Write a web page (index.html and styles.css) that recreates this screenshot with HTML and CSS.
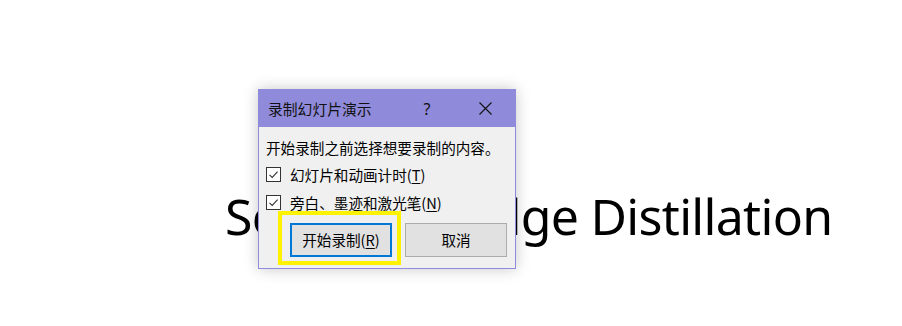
FILE: index.html
```html
<!DOCTYPE html>
<html lang="zh">
<head>
<meta charset="utf-8">
<link rel="stylesheet" href="styles.css">
</head>
<body>
<div class="slide">
  <div class="slide-title">Self-Knowledge Distillation</div>
</div>
<div class="dialog">
  <div class="titlebar">
    <span class="title">录制幻灯片演示</span>
    <span class="help">?</span>
    <span class="close"><svg width="13" height="13" viewBox="0 0 13 13"><path d="M0.5 0.5 L12.5 12.5 M12.5 0.5 L0.5 12.5" stroke="#111" stroke-width="1.1" fill="none"/></svg></span>
  </div>
  <div class="body">
    <div class="intro">开始录制之前选择想要录制的内容。</div>
    <label class="check">
      <span class="box"><svg width="13" height="13" viewBox="0 0 13 13"><path d="M2.5 6.8 L5.2 9.4 L10.6 3.6" stroke="#333" stroke-width="1.1" fill="none"/></svg></span>
      <span class="label">幻灯片和动画计时(</span><span class="label key">T</span><span class="label">)</span>
    </label>
    <label class="check">
      <span class="box"><svg width="13" height="13" viewBox="0 0 13 13"><path d="M2.5 6.8 L5.2 9.4 L10.6 3.6" stroke="#333" stroke-width="1.1" fill="none"/></svg></span>
      <span class="label">旁白、墨迹和激光笔(</span><span class="label key">N</span><span class="label">)</span>
    </label>
    <div class="buttons">
      <div class="btn primary"><span>开始录制(</span><span class="key">R</span><span>)</span></div>
      <div class="btn"><span>取消</span></div>
    </div>
  </div>
  <div class="highlight"></div>
</div>
</body>
</html>
```

FILE: styles.css
```css
html, body {
  margin: 0;
  padding: 0;
  background: #ffffff;
}
body {
  width: 902px;
  height: 326px;
  overflow: hidden;
  position: relative;
}
.slide {
  padding-top: 191px;
  padding-left: 225px;
}
.slide-title {
  font-family: "Noto Sans", "Open Sans", sans-serif;
  font-size: 50px;
  line-height: 50px;
  letter-spacing: -0.7px;
  color: #000;
  white-space: nowrap;
}
.dialog {
  position: absolute;
  left: 258px;
  top: 89px;
  width: 258px;
  height: 180px;
  box-sizing: border-box;
  border: 1px solid #8f8ad9;
  background: #f0f0f0;
  box-shadow: 0 0 14px rgba(0, 0, 0, 0.22);
  font-family: "Noto Sans CJK SC", "Noto Sans", sans-serif;
  font-size: 14.6px;
  color: #000;
}
.titlebar {
  height: 37px;
  background: #8f8ad9;
  display: flex;
  align-items: center;
  padding-left: 9px;
}
.title {
  flex: 1;
  color: #111;
  font-size: 14.8px;
  line-height: 20px;
}
.help {
  width: 56px;
  text-align: center;
  font-family: "Noto Sans", sans-serif;
  font-size: 16px;
  line-height: 20px;
  color: #111;
}
.close {
  width: 60px;
  display: flex;
  justify-content: center;
  align-items: center;
}
.close svg {
  display: block;
}
.body {
  padding: 11px 0 0 7px;
}
.intro {
  line-height: 20px;
  height: 20px;
  white-space: nowrap;
}
.check {
  display: flex;
  align-items: center;
  height: 22px;
  margin-top: 6px;
  white-space: nowrap;
}
.label {
  line-height: 18px;
}
.key {
  text-decoration: underline;
  text-underline-offset: 2px;
}
.box {
  width: 15px;
  height: 15px;
  box-sizing: border-box;
  border: 1px solid #333;
  background: #fff;
  margin-right: 9px;
  display: flex;
  align-items: center;
  justify-content: center;
  margin-top: -2px;
}
.box svg {
  display: block;
}
.buttons {
  display: flex;
  justify-content: flex-end;
  gap: 13px;
  padding-right: 8px;
  margin-top: 9px;
}
.btn {
  width: 102px;
  height: 34px;
  box-sizing: border-box;
  border: 1px solid #adadad;
  background: #e1e1e1;
  display: flex;
  align-items: center;
  justify-content: center;
  line-height: 18px;
  white-space: nowrap;
}
.btn.primary {
  border: 2px solid #0078d7;
}
.highlight {
  position: absolute;
  left: 19px;
  top: 121px;
  width: 123px;
  height: 54px;
  box-sizing: border-box;
  border: 4px solid #fff200;
}
```
